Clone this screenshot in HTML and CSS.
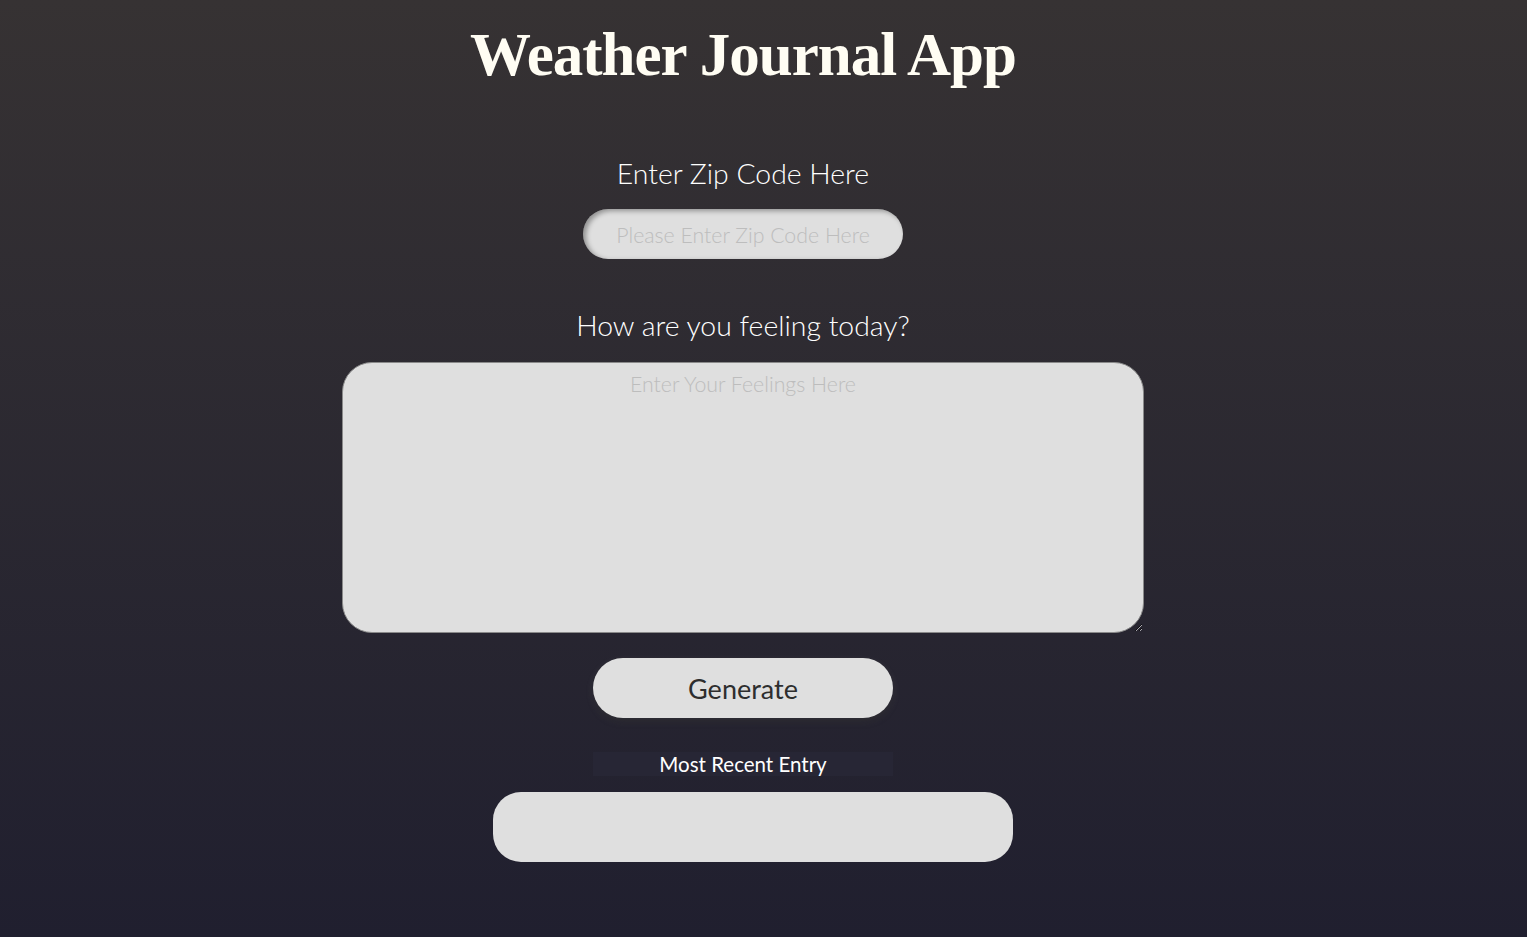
FILE: index.html
```html
<!DOCTYPE html>
<html lang="en">
<head>
<meta charset="utf-8">
<title>Weather Journal App</title>
<link rel="stylesheet" href="styles.css">
</head>
<body>
<main class="app">
  <h1 class="title">Weather Journal App</h1>
  <div class="field zip-field">
    <label class="label" for="zip">Enter Zip Code Here</label>
    <input class="zip" id="zip" type="text" placeholder="Please Enter Zip Code Here">
  </div>
  <div class="field feelings-field">
    <label class="label" for="feelings">How are you feeling today?</label>
    <textarea class="feelings" id="feelings" placeholder="Enter Your Feelings Here"></textarea>
  </div>
  <button class="generate" type="button">Generate</button>
  <div class="recent-title">Most Recent Entry</div>
  <div class="entry"></div>
</main>
</body>
</html>
```
FILE: styles.css
```css
html, body {
  margin: 0;
  height: 100%;
}
body {
  background: linear-gradient(to bottom, #363233 0%, #201f2f 100%);
  font-family: "Lato", "Open Sans", sans-serif;
  color: #ffffff;
  overflow: hidden;
}
.app {
  width: 1486px;
  display: flex;
  flex-direction: column;
  align-items: center;
}
.title {
  margin: 20px 0 0;
  font-family: "Liberation Serif", serif;
  font-weight: 700;
  font-size: 61px;
  line-height: 70px;
  color: #fffdf3;
  letter-spacing: -1px;
}
.field {
  display: flex;
  flex-direction: column;
  align-items: center;
}
.label {
  font-size: 28.4px;
  font-weight: 300;
  line-height: 32px;
  color: #ffffff;
}
.zip-field {
  margin-top: 67px;
}
.zip {
  margin-top: 20px;
  width: 320px;
  height: 50px;
  box-sizing: border-box;
  border: none;
  border-radius: 25px;
  background: #dfdfdf;
  box-shadow: inset 3px 2px 5px rgba(0,0,0,0.35);
  font-family: inherit;
  font-size: 21.3px;
  font-weight: 300;
  text-align: center;
  color: #333;
  outline: none;
  padding-top: 3px;
}
.zip::placeholder, .feelings::placeholder {
  color: #bdbdbd;
}
.feelings-field {
  margin-top: 50px;
}
.feelings {
  margin-top: 21px;
  width: 802px;
  height: 271px;
  box-sizing: border-box;
  border: 1px solid #8a8a8a;
  border-radius: 30px;
  background: #dfdfdf;
  padding: 8px 20px;
  font-family: inherit;
  font-size: 21.3px;
  font-weight: 300;
  text-align: center;
  color: #333;
  outline: none;
}
.generate {
  margin-top: 25px;
  width: 300px;
  height: 60px;
  border: none;
  border-radius: 30px;
  background: #dfdfdf;
  box-shadow: 0 3px 8px rgba(255,255,255,0.12), 0 4px 6px rgba(0,0,0,0.4);
  font-family: inherit;
  font-size: 27px;
  font-weight: 400;
  color: #2e2e2e;
  cursor: pointer;
}
.recent-title {
  margin-top: 34px;
  width: 300px;
  height: 24px;
  line-height: 24px;
  background: #272635;
  text-align: center;
  font-size: 20.5px;
  font-weight: 400;
  color: #ffffff;
}
.entry {
  margin-top: 16px;
  margin-left: 20px;
  width: 520px;
  height: 70px;
  border-radius: 28px;
  background: #dfdfdf;
}
```
